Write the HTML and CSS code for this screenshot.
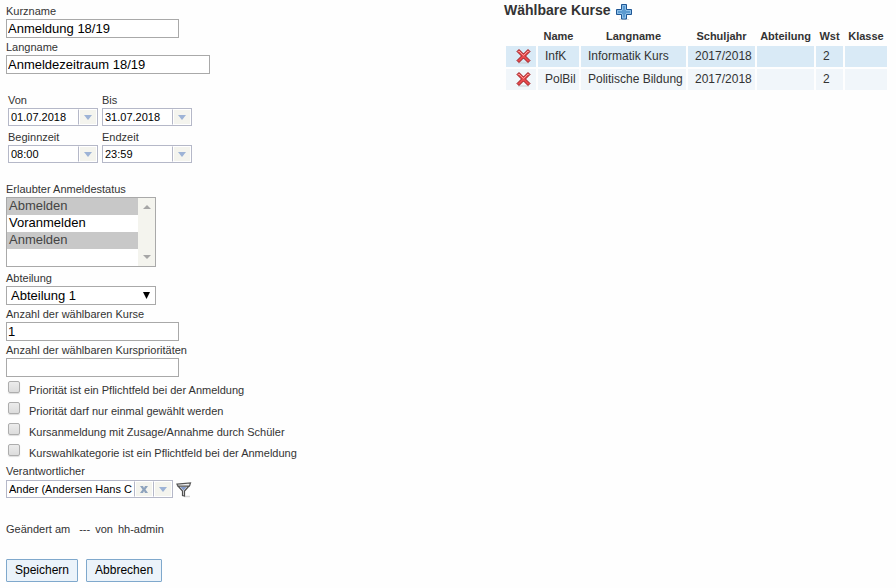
FILE: index.html
```html
<!DOCTYPE html>
<html lang="de">
<head>
    <meta charset="UTF-8">
    <meta name="viewport" content="width=device-width, initial-scale=1.0">
    <title>Anmeldezeitraum</title>
    <link rel="stylesheet" href="styles.css">
</head>
<body>

<div class="page">
    <form class="period-form">
        <div class="field">
            <label for="shortname">Kurzname</label>
            <input type="text" id="shortname" class="text" value="Anmeldung 18/19">
        </div>
        <div class="field">
            <label for="longname">Langname</label>
            <input type="text" id="longname" class="text wide" value="Anmeldezeitraum 18/19">
        </div>

        <div class="dates">
            <div class="field">
                <label for="from">Von</label>
                <div class="combo">
                    <input type="text" id="from" value="01.07.2018">
                    <button type="button" aria-label="Datum wählen"><svg width="8" height="5"><path d="M0 0h8L4 5z"/></svg></button>
                </div>
            </div>
            <div class="field">
                <label for="to">Bis</label>
                <div class="combo">
                    <input type="text" id="to" value="31.07.2018">
                    <button type="button" aria-label="Datum wählen"><svg width="8" height="5"><path d="M0 0h8L4 5z"/></svg></button>
                </div>
            </div>
            <div class="field">
                <label for="start">Beginnzeit</label>
                <div class="combo">
                    <input type="text" id="start" value="08:00">
                    <button type="button" aria-label="Zeit wählen"><svg width="8" height="5"><path d="M0 0h8L4 5z"/></svg></button>
                </div>
            </div>
            <div class="field">
                <label for="end">Endzeit</label>
                <div class="combo">
                    <input type="text" id="end" value="23:59">
                    <button type="button" aria-label="Zeit wählen"><svg width="8" height="5"><path d="M0 0h8L4 5z"/></svg></button>
                </div>
            </div>
        </div>

        <div class="field">
            <label for="status">Erlaubter Anmeldestatus</label>
            <div class="listbox">
                <select id="status" multiple size="4">
                    <option selected>Abmelden</option>
                    <option>Voranmelden</option>
                    <option selected>Anmelden</option>
                </select>
                <div class="scroller">
                    <svg width="8" height="4"><path d="M0 4h8L4 0z"/></svg>
                    <svg width="8" height="4"><path d="M0 0h8L4 4z"/></svg>
                </div>
            </div>
        </div>
        <div class="field">
            <label for="department">Abteilung</label>
            <div class="dropdown">
                <select id="department">
                    <option>Abteilung 1</option>
                </select>
                <svg width="7" height="7"><path d="M0 0h7L3.500 7z"/></svg>
            </div>
        </div>
        <div class="field">
            <label for="courses">Anzahl der wählbaren Kurse</label>
            <input type="text" id="courses" class="text" value="1">
        </div>
        <div class="field">
            <label for="priorities">Anzahl der wählbaren Kursprioritäten</label>
            <input type="text" id="priorities" class="text">
        </div>

        <div class="checks">
            <div class="check">
                <input type="checkbox" id="prio-required">
                <label for="prio-required">Priorität ist ein Pflichtfeld bei der Anmeldung</label>
            </div>
            <div class="check">
                <input type="checkbox" id="prio-once">
                <label for="prio-once">Priorität darf nur einmal gewählt werden</label>
            </div>
            <div class="check">
                <input type="checkbox" id="confirm">
                <label for="confirm">Kursanmeldung mit Zusage/Annahme durch Schüler</label>
            </div>
            <div class="check">
                <input type="checkbox" id="category">
                <label for="category">Kurswahlkategorie ist ein Pflichtfeld bei der Anmeldung</label>
            </div>
        </div>

        <div class="field">
            <label for="responsible">Verantwortlicher</label>
            <div class="person">
                <div class="combo">
                    <input type="text" id="responsible" value="Ander (Andersen Hans C">
                    <button type="button" aria-label="Leeren"><svg class="clear" width="8" height="7"><path d="M0 0h3l1 2 1-2h3L5.500 3.500 8 7H5L4 5 3 7H0l2.500-3.500z"/></svg></button>
                    <button type="button" aria-label="Öffnen"><svg width="8" height="5"><path d="M0 0h8L4 5z"/></svg></button>
                </div>
                <button type="button" class="icon-button" aria-label="Filter">
                    <svg width="16" height="16" viewBox="0 0 16 16">
                        <path d="M8 14.500h6" stroke="#d5d5d5" stroke-width="1.500"/>
                        <path d="M2 4l4.500 5v4.500l2 .5V9L13 4z" fill="#e4e4e4" stroke="#505050" stroke-width="1.200"/>
                        <path d="M4.500 5h6L7.500 8.500z" fill="#7f97c9"/>
                        <path d="M1 2.200l13.500-1.200L13.500 4H2z" fill="#f0f0f0" stroke="#555" stroke-width="1.200"/>
                    </svg>
                </button>
            </div>
        </div>

        <div class="changed">
            <span>Geändert am</span>
            <span class="when">---</span>
            <span>von</span>
            <span>hh-admin</span>
        </div>

        <div class="actions">
            <button type="submit">Speichern</button>
            <button type="button">Abbrechen</button>
        </div>
    </form>

    <div class="courses">
        <div class="title">
            <h2>Wählbare Kurse</h2>
            <button type="button" class="icon-button" aria-label="Kurs hinzufügen">
                <svg width="16" height="16" viewBox="0 0 16 16">
                    <path d="M3 15.500h10" stroke="#dedede"/>
                    <path d="M5.500 .5h5v5h5v5h-5v4.500h-5v-4.500h-5v-5h5z" fill="#5b9ad0" stroke="#1f5795"/>
                    <path d="M6.500 9.500V1.500h3v5h5v3h-5v4.500h-3V9.500h-5v-3h5" fill="none" stroke="#8fc0e8"/>
                    <path d="M6 6h4v4H6z" fill="#5b9ad0"/>
                </svg>
            </button>
        </div>
        <table>
            <colgroup>
                <col class="c-delete"><col class="c-name"><col class="c-long"><col class="c-year"><col class="c-dept"><col class="c-hours"><col class="c-class">
            </colgroup>
            <thead>
                <tr>
                    <td></td>
                    <th>Name</th>
                    <th>Langname</th>
                    <th>Schuljahr</th>
                    <th>Abteilung</th>
                    <th>Wst</th>
                    <th>Klasse</th>
                </tr>
            </thead>
            <tbody>
                <tr>
                    <td>
                        <button type="button" class="icon-button" aria-label="InfK entfernen">
                            <svg width="16" height="16" viewBox="0 0 16 16">
                                <path d="M2 15h11" stroke="#c4cdd3"/>
                                <path d="M3 1.500l4.500 4.500L12 1.500 14 3.500 9.500 8l4.500 4.500-2 2L7.500 10 3 14.500l-2-2L5.500 8 1 3.500z" fill="#e8494c" stroke="#9c1a1e"/>
                                <path d="M2.500 4l.5-1 4.500 4.500L12 3l.5 1" fill="none" stroke="#ff9c98"/>
                            </svg>
                        </button>
                    </td>
                    <td>InfK</td>
                    <td>Informatik Kurs</td>
                    <td>2017/2018</td>
                    <td></td>
                    <td>2</td>
                    <td></td>
                </tr>
                <tr>
                    <td>
                        <button type="button" class="icon-button" aria-label="PolBil entfernen">
                            <svg width="16" height="16" viewBox="0 0 16 16">
                                <path d="M2 15h11" stroke="#c4cdd3"/>
                                <path d="M3 1.500l4.500 4.500L12 1.500 14 3.500 9.500 8l4.500 4.500-2 2L7.500 10 3 14.500l-2-2L5.500 8 1 3.500z" fill="#e8494c" stroke="#9c1a1e"/>
                                <path d="M2.500 4l.5-1 4.500 4.500L12 3l.5 1" fill="none" stroke="#ff9c98"/>
                            </svg>
                        </button>
                    </td>
                    <td>PolBil</td>
                    <td>Politische Bildung</td>
                    <td>2017/2018</td>
                    <td></td>
                    <td>2</td>
                    <td></td>
                </tr>
            </tbody>
        </table>
    </div>
</div>

</body>
</html>
```
FILE: styles.css
```css
body {
    margin: 0;
    background-color: #fefefe;
    color: #333;
    font-family: "Liberation Sans", Arial, sans-serif;
    font-size: 11px;
}

* {
    box-sizing: border-box;
}

input,
select,
button {
    margin: 0;
    font-family: inherit;
    border-radius: 0;
}

svg {
    display: block;
}

.page {
    display: grid;
    grid-template-columns: 9fr 7fr;
}

.period-form {
    padding: 2px 6px;
}

.field label {
    display: block;
    height: 17px;
    line-height: 19px;
}

.text {
    display: block;
    width: 173px;
    height: 19px;
    padding: 0 1px;
    border: 1px solid #a9a9a9;
    background-color: #fff;
    color: #000;
    font-size: 13px;
}

.wide {
    width: 204px;
}

/* date and time pickers */
.dates {
    display: grid;
    grid-template-columns: 90px 90px;
    gap: 2px 4px;
    padding: 17px 2px;
}

.combo {
    display: flex;
    width: 90px;
    height: 18px;
    border: 1px solid #b5b8c8;
    background-color: #fff;
}

.combo input {
    flex: 1;
    min-width: 0;
    padding: 0 2px;
    border: none;
    background: none;
    color: #000;
    font-size: 11px;
}

.combo button {
    display: flex;
    align-items: center;
    justify-content: center;
    width: 19px;
    padding: 0;
    border: 1px solid #fff;
    border-left: 1px solid #b5b8c8;
    background-color: #f4f4ee;
    box-shadow: inset 1px 0 #fff;
    fill: #9db3d6;
}

.combo .clear {
    fill: #8ea3bd;
}

.listbox {
    display: flex;
    width: 150px;
    height: 70px;
    margin-bottom: 2px;
    border: 1px solid #a9a9a9;
    background-color: #fff;
}

.listbox select {
    flex: 1;
    min-width: 0;
    padding: 0;
    border: none;
    outline: none;
    overflow: hidden;
    background: none;
    color: #000;
    font-size: 13px;
}

.listbox option {
    min-height: 17px;
    padding: 0 2px;
    line-height: 17px;
}

.listbox option:checked {
    background: #c8c8c8 linear-gradient(#c8c8c8, #c8c8c8);
    color: #444;
}

.scroller {
    display: flex;
    flex-direction: column;
    justify-content: space-between;
    align-items: center;
    width: 17px;
    padding: 7px 0;
    background-color: #f4f4ee;
    fill: #a6a6a6;
}

.dropdown {
    position: relative;
    width: 150px;
}

.dropdown select {
    display: block;
    width: 100%;
    height: 19px;
    padding: 0 4px;
    border: 1px solid #a9a9a9;
    background-color: #fff;
    color: #000;
    font-size: 13px;
    appearance: none;
}

.dropdown svg {
    position: absolute;
    top: 6px;
    right: 6px;
    pointer-events: none;
}

.checks {
    padding: 1px 2px 0;
}

.check {
    display: flex;
    gap: 9px;
    height: 21px;
    line-height: 25px;
}

.check input {
    width: 12px;
    height: 12px;
    margin-top: 3px;
    border: 1px solid #adadad;
    border-radius: 2px;
    background: linear-gradient(#ececec, #dcdcdc);
    box-shadow: 0 1px 1px #ddd;
    appearance: none;
}

.person {
    display: flex;
    gap: 3px;
    padding-top: 1px;
}

.person .combo {
    width: 167px;
}

.person .icon-button {
    padding-top: 2px;
}

.icon-button {
    display: block;
    padding: 0;
    border: none;
    background: none;
}

.changed {
    display: flex;
    gap: 5px;
    padding-top: 24px;
    line-height: 14px;
}

.changed .when {
    padding-left: 4px;
}

.actions {
    display: flex;
    gap: 8px;
    padding-top: 23px;
}

.actions button {
    height: 23px;
    padding: 0 8px 2px;
    border: 1px solid #7fa8cc;
    border-radius: 1px;
    background-color: #ebf3fa;
    color: #000;
    font-size: 12px;
}

/* course table */
.title {
    display: flex;
    gap: 5px;
    padding-top: 2px;
}

.title h2 {
    margin: 0;
    font-size: 14px;
    line-height: 17px;
}

.title .icon-button {
    padding-top: 2px;
}

table {
    border-spacing: 2px;
    table-layout: fixed;
    width: 385px;
    margin-top: 4px;
    font-size: 12px;
}

th,
td {
    height: 21px;
    padding: 0;
    white-space: nowrap;
}

thead td,
th {
    height: 18px;
    padding-top: 2px;
    font-size: 11px;
}

tbody td {
    padding: 0 0 2px 7px;
    background-color: #f1f6fa;
}

tbody tr:first-child td {
    background-color: #d9eaf6;
}

tbody td:first-child {
    padding-left: 10px;
}

.c-delete { width: 30px; }
.c-name { width: 41px; }
.c-long { width: 105px; }
.c-year { width: 67px; }
.c-dept { width: 57px; }
.c-hours { width: 27px; }
.c-class { width: 42px; }
```
